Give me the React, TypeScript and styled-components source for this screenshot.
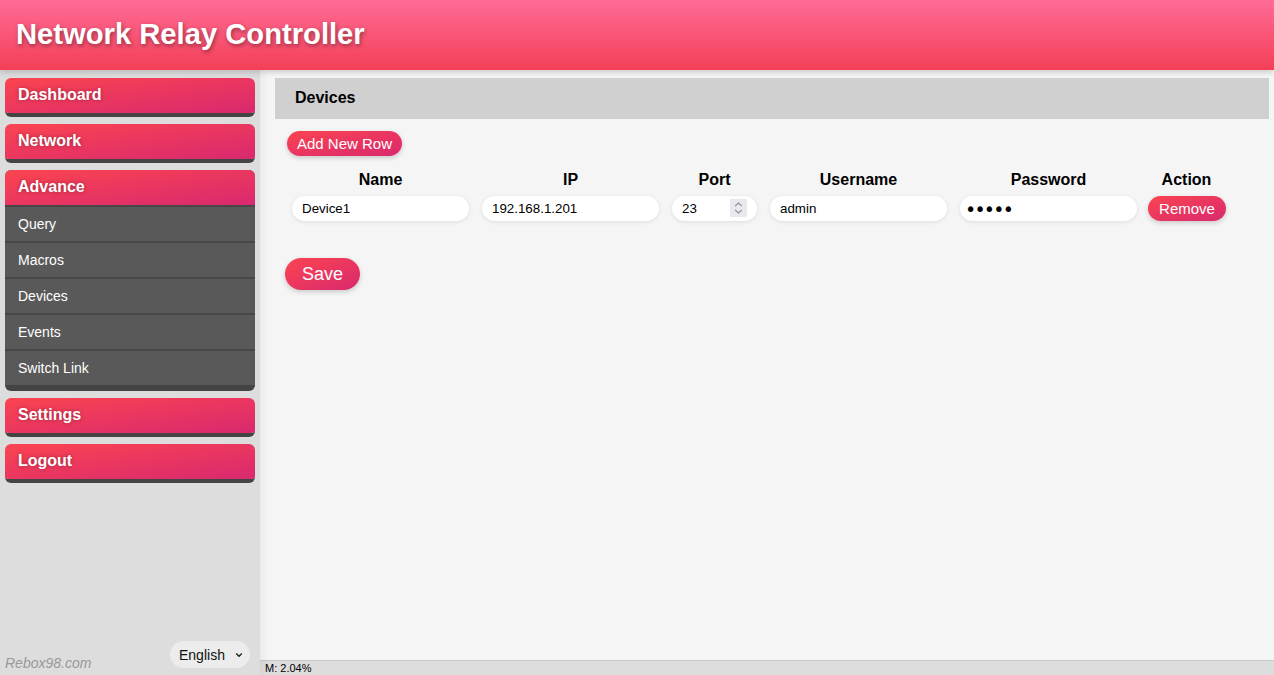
import styled, { createGlobalStyle } from 'styled-components'

const GlobalStyle = createGlobalStyle`
  html, body {
    margin: 0;
    padding: 0;
    font-family: 'Liberation Sans', Arial, sans-serif;
    background-color: #f5f5f5;
  }
  * {
    box-sizing: border-box;
  }
  input[type=number]::-webkit-inner-spin-button,
  input[type=number]::-webkit-outer-spin-button {
    -webkit-appearance: none;
    margin: 0;
  }
`

const Page = styled.div`
  display: flex;
  flex-direction: column;
  height: 100vh;
  overflow: hidden;
`

const Header = styled.header`
  position: relative;
  z-index: 2;
  height: 70px;
  flex-shrink: 0;
  display: flex;
  align-items: center;
  padding: 0 16px 1px;
  background: linear-gradient(to bottom, #ff6b96, #f43f57);
  box-shadow: 0 2px 6px rgba(0, 0, 0, 0.18);
`

const Title = styled.h1`
  margin: 0;
  color: #fff;
  font-size: 29.2px;
  font-weight: bold;
  text-shadow: 1px 2px 4px rgba(0, 0, 0, 0.4);
`

const Body = styled.div`
  display: flex;
  flex: 1;
  min-height: 0;
`

const Sidebar = styled.nav`
  position: relative;
  z-index: 1;
  width: 260px;
  flex-shrink: 0;
  display: flex;
  flex-direction: column;
  gap: 7px;
  padding: 8px 5px 0;
  background-color: #dddddd;
  box-shadow: 3px 0 8px rgba(0, 0, 0, 0.06);
`

const NavGroup = styled.div<{ $open?: boolean }>`
  border-radius: 6px;
  overflow: hidden;
  border-bottom: ${p => (p.$open ? '6px' : '4px')} solid #444;
  background-color: #595959;
`

const NavHead = styled.div`
  height: 35px;
  display: flex;
  align-items: center;
  padding: 0 13px 2px;
  background: linear-gradient(to bottom right, #fb4450, #d9296f);
  color: #fff;
  font-size: 16px;
  font-weight: bold;
  text-shadow: 0 0 4px rgba(0, 0, 0, 0.35);
`

const SubItem = styled.div`
  height: 36px;
  display: flex;
  align-items: center;
  padding: 0 13px 1px;
  border-top: 2px solid #474747;
  color: #fff;
  font-size: 14px;
`

const SideFooter = styled.div`
  margin-top: auto;
  display: flex;
  justify-content: space-between;
  align-items: flex-end;
  padding: 0 5px 4px 0;
`

const Brand = styled.span`
  color: #999;
  font-style: italic;
  font-size: 14px;
`

const LangSelect = styled.div`
  display: flex;
  align-items: center;
  justify-content: space-between;
  height: 27px;
  width: 80px;
  margin-bottom: 3px;
  padding: 0 7px 0 9px;
  border-radius: 14px;
  background-color: #ececec;
  color: #111;
  font-size: 14px;
`

const Chevron = styled.svg`
  flex-shrink: 0;
  display: block;
`

const Main = styled.main`
  flex: 1;
  display: flex;
  flex-direction: column;
  min-width: 0;
`

const Content = styled.div`
  flex: 1;
  padding: 8px 5px 0 15px;
`

const PanelHead = styled.div`
  height: 41px;
  display: flex;
  align-items: center;
  padding: 0 20px 2px;
  background-color: #d0d0d0;
  font-size: 16px;
  font-weight: bold;
  color: #000;
`

const PanelBody = styled.div`
  padding: 12px 0 0 12px;
`

const PillButton = styled.button<{ $big?: boolean }>`
  border: none;
  cursor: pointer;
  font-family: 'Liberation Sans', Arial, sans-serif;
  color: #fff;
  background: linear-gradient(to bottom right, #fb4450, #d9296f);
  box-shadow: 0 2px 5px rgba(0, 0, 0, 0.18);
  border-radius: 16px;
  font-size: ${p => (p.$big ? '18px' : '15px')};
  height: ${p => (p.$big ? '32px' : '25px')};
  padding: ${p => (p.$big ? '0 17px' : '0 10px')};
`

const RemoveButton = styled(PillButton)`
  margin-left: -2px;
`

const Grid = styled.div`
  display: grid;
  grid-template-columns: 177px 177px 85px 177px 177px 76px;
  column-gap: 13px;
  row-gap: 7px;
  align-items: center;
  margin: 15px 0 0 5px;
`

const ColHead = styled.div<{ $shift?: boolean }>`
  text-align: center;
  font-size: 16px;
  font-weight: bold;
  color: #000;
  margin-left: ${p => (p.$shift ? '-3px' : '0')};
`

const Field = styled.input<{ $secret?: boolean }>`
  height: 25px;
  width: 100%;
  border: none;
  outline: none;
  border-radius: 13px;
  padding: 0 10px;
  background-color: #fff;
  box-shadow: 0 1px 4px rgba(0, 0, 0, 0.1);
  font-family: ${p => (p.$secret ? "'DejaVu Sans', sans-serif" : "'Liberation Sans', Arial, sans-serif")};
  font-size: ${p => (p.$secret ? '19px' : '13.33px')};
  letter-spacing: ${p => (p.$secret ? '-1.8px' : 'normal')};
  padding-left: ${p => (p.$secret ? '5px' : '10px')};
  color: #000;
`

const NumberWrap = styled.div`
  position: relative;
`

const Spinner = styled.div`
  position: absolute;
  top: 3px;
  right: 10px;
  width: 17px;
  height: 18px;
  display: flex;
  flex-direction: column;
  align-items: center;
  justify-content: center;
  gap: 2px;
  background-color: #e9e9ed;
  pointer-events: none;
`

const SaveRow = styled.div`
  margin-top: 37px;
  margin-left: -2px;
`

const StatusBar = styled.div`
  height: 15px;
  flex-shrink: 0;
  display: flex;
  align-items: center;
  padding: 0 5px;
  background-color: #dddddd;
  border-top: 1px solid #c8c8c8;
  font-size: 11px;
  color: #000;
`

const subItems = ['Query', 'Macros', 'Devices', 'Events', 'Switch Link']
const columns = ['Name', 'IP', 'Port', 'Username', 'Password', 'Action']

export default function App() {
  return (
    <Page>
      <GlobalStyle />
      <Header>
        <Title>Network Relay Controller</Title>
      </Header>
      <Body>
        <Sidebar>
          <NavGroup><NavHead>Dashboard</NavHead></NavGroup>
          <NavGroup><NavHead>Network</NavHead></NavGroup>
          <NavGroup $open>
            <NavHead>Advance</NavHead>
            {subItems.map(item => (
              <SubItem key={item}>{item}</SubItem>
            ))}
          </NavGroup>
          <NavGroup><NavHead>Settings</NavHead></NavGroup>
          <NavGroup><NavHead>Logout</NavHead></NavGroup>
          <SideFooter>
            <Brand>Rebox98.com</Brand>
            <LangSelect>
              English
              <Chevron width="8" height="6" viewBox="0 0 8 6">
                <path d="M1.2 1.5 L4 4.3 L6.8 1.5" fill="none" stroke="#222" strokeWidth="1.4" />
              </Chevron>
            </LangSelect>
          </SideFooter>
        </Sidebar>
        <Main>
          <Content>
            <PanelHead>Devices</PanelHead>
            <PanelBody>
              <PillButton>Add New Row</PillButton>
              <Grid>
                {columns.map(c => (
                  <ColHead key={c} $shift={c === 'Action'}>{c}</ColHead>
                ))}
                <Field defaultValue="Device1" />
                <Field defaultValue="192.168.1.201" />
                <NumberWrap>
                  <Field type="number" defaultValue={23} />
                  <Spinner>
                    <svg width="9" height="5" viewBox="0 0 9 5">
                      <path d="M1 4.2 L4.5 1 L8 4.2" fill="none" stroke="#8a8a90" strokeWidth="1.1" />
                    </svg>
                    <svg width="9" height="5" viewBox="0 0 9 5">
                      <path d="M1 0.8 L4.5 4 L8 0.8" fill="none" stroke="#8a8a90" strokeWidth="1.1" />
                    </svg>
                  </Spinner>
                </NumberWrap>
                <Field defaultValue="admin" />
                <Field type="password" $secret defaultValue="admin" />
                <RemoveButton>Remove</RemoveButton>
              </Grid>
              <SaveRow>
                <PillButton $big>Save</PillButton>
              </SaveRow>
            </PanelBody>
          </Content>
          <StatusBar>M: 2.04%</StatusBar>
        </Main>
      </Body>
    </Page>
  )
}
